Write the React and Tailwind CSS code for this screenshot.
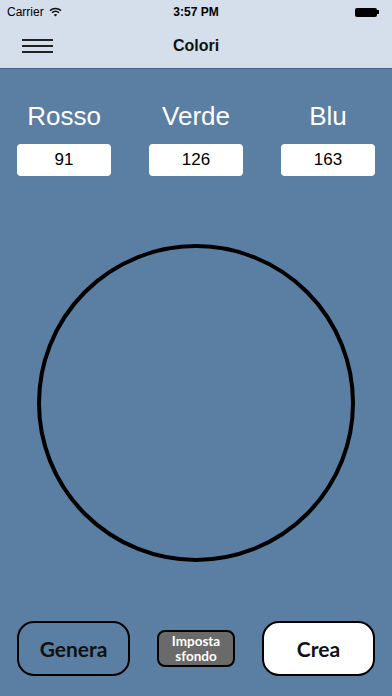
import React from 'react';

const values = [
  { label: 'Rosso', value: 91 },
  { label: 'Verde', value: 126 },
  { label: 'Blu', value: 163 },
];

const App = () => {
  return (
    <div className="w-[392px] h-[696px] flex flex-col bg-[#5b7ea3] overflow-hidden" style={{ fontFamily: '"Liberation Sans", Arial, sans-serif' }}>
      {/* status + nav bar */}
      <div className="h-[69px] bg-[#d4dfeb] border-b border-[#4a6787] flex flex-col">
        <div className="h-[24px] relative flex items-center px-[7px] text-[12px] text-black">
          <span>Carrier</span>
          <svg width="13" height="10" viewBox="0 0 13 10" className="ml-[5px]">
            <path d="M1 3.6 A8 8 0 0 1 12 3.6" stroke="#111" strokeWidth="1.5" fill="none" />
            <path d="M3 5.8 A5 5 0 0 1 10 5.8" stroke="#111" strokeWidth="1.5" fill="none" />
            <path d="M6.5 9.5 L4.8 7.7 A2.5 2.5 0 0 1 8.2 7.7 Z" fill="#111" />
          </svg>
          <span className="absolute left-0 right-0 text-center font-semibold">3:57 PM</span>
          <div className="ml-auto flex items-center mr-[6px]">
            <div className="w-[22px] h-[9px] bg-black rounded-[2px]" />
            <div className="w-[2px] h-[4px] bg-black" />
          </div>
        </div>
        <div className="flex-1 relative flex items-center">
          <div className="ml-[22px] flex flex-col gap-[4px]">
            <div className="w-[31px] h-[2px] bg-[#222]" />
            <div className="w-[31px] h-[2px] bg-[#222]" />
            <div className="w-[31px] h-[2px] bg-[#222]" />
          </div>
          <span className="absolute left-0 right-0 text-center text-[16px] font-semibold text-[#111]">Colori</span>
        </div>
      </div>

      {/* values */}
      <div className="flex justify-between px-[17px] pt-[31px]">
        {values.map((v) => (
          <div key={v.label} className="flex flex-col items-center w-[94px]">
            <span className="text-[26px] leading-[32px] text-white">{v.label}</span>
            <div className="mt-[12px] w-[94px] h-[32px] bg-white rounded-[4px] flex items-center justify-center text-[17px] text-black">
              {v.value}
            </div>
          </div>
        ))}
      </div>

      {/* circle */}
      <div className="flex justify-center mt-[68px]">
        <div className="w-[318px] h-[318px] rounded-full border-[4px] border-black" />
      </div>

      {/* buttons */}
      <div className="mt-auto mb-[20px] flex items-center justify-between px-[17px]" style={{ fontFamily: 'Lato, "Open Sans", sans-serif' }}>
        <div className="w-[113px] h-[55px] rounded-[17px] border-[2.5px] border-black flex items-center justify-center text-[21px] font-bold text-[#111]">
          Genera
        </div>
        <div className="w-[78px] h-[37px] rounded-[8px] border-[2px] border-black bg-[#6a6a6a] flex flex-col items-center justify-center text-[13.5px] leading-[15px] font-bold text-white">
          <span>Imposta</span>
          <span>sfondo</span>
        </div>
        <div className="w-[113px] h-[55px] rounded-[17px] border-[2.5px] border-black bg-white flex items-center justify-center text-[21px] font-bold text-[#111]">
          Crea
        </div>
      </div>
    </div>
  );
};

export default App;
